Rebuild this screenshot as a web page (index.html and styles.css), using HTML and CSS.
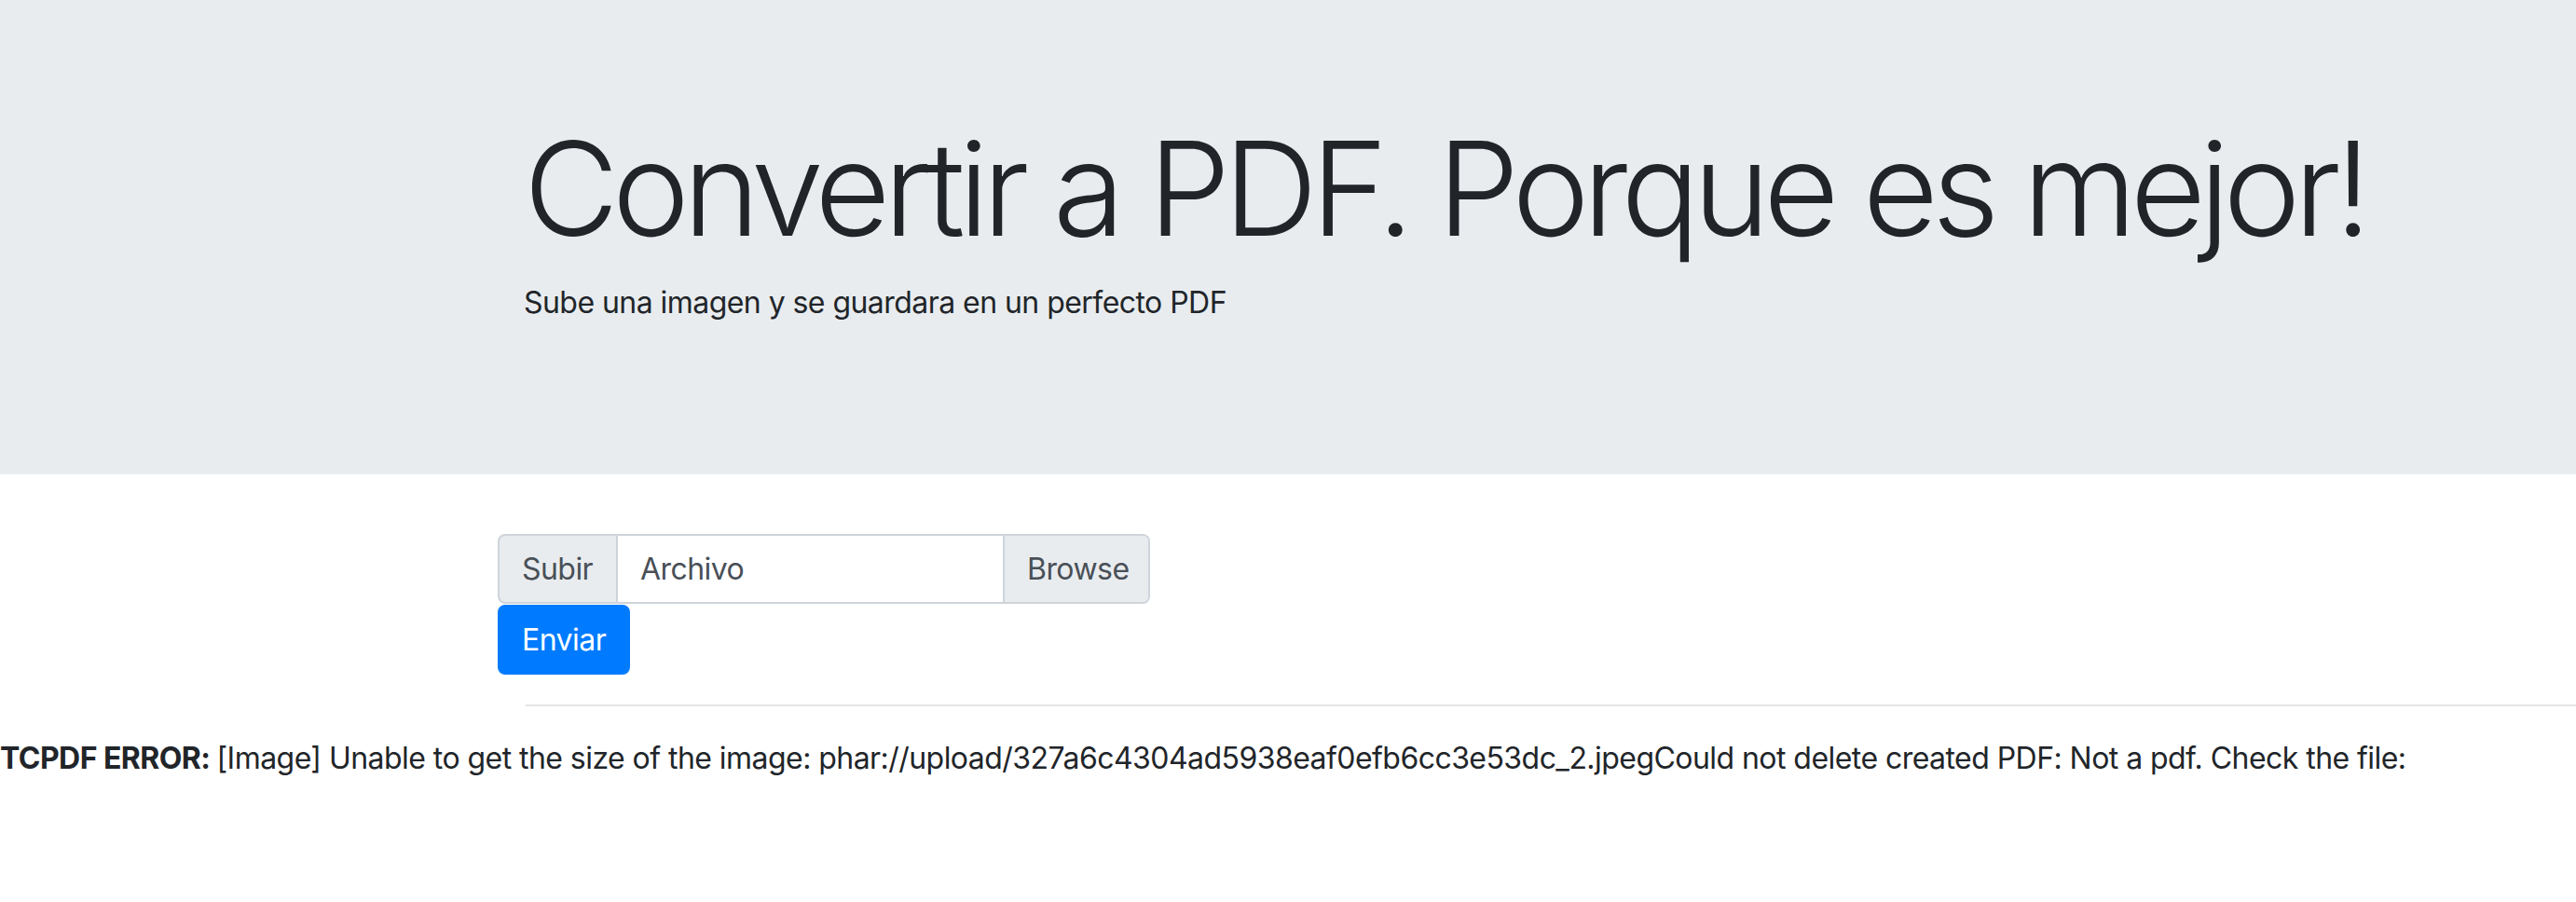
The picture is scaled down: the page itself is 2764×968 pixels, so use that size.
FILE: index.html
```html
<!DOCTYPE html>
<html lang="es">
<head>
<meta charset="utf-8">
<title>Convertir a PDF</title>
<link rel="stylesheet" href="styles.css">
</head>
<body>
<div class="jumbotron">
  <div class="jumbo-inner">
    <h1 class="display">Convertir a PDF. Porque es mejor!</h1>
    <p class="lead">Sube una imagen y se guardara en un perfecto PDF</p>
  </div>
</div>
<div class="main">
  <form class="upload">
    <div class="input-group">
      <span class="addon">Subir</span>
      <div class="file">
        <span class="file-label">Archivo</span>
        <span class="browse">Browse</span>
      </div>
    </div>
    <button class="btn" type="button">Enviar</button>
  </form>
  <hr class="rule">
</div>
<p class="error"><strong>TCPDF ERROR: </strong>[Image] Unable to get the size of the image: phar://upload/327a6c4304ad5938eaf0efb6cc3e53dc_2.jpegCould not delete created PDF: Not a pdf. Check the file:</p>
</body>
</html>
```
FILE: styles.css
```css
* { box-sizing: border-box; }
html, body {
  margin: 0;
  padding: 0;
  background: #fff;
}
body {
  font-family: Inter, "Noto Sans", sans-serif;
  font-size: 32px;
  line-height: 1.5;
  letter-spacing: -0.55px;
  color: #212529;
  overflow: hidden;
}
.jumbotron {
  background: #e9ecef;
  height: 509px;
  padding: 118px 0 0 562px;
  margin-bottom: 64px;
}
.display {
  margin: 0 0 15px 0;
  font-size: 140px;
  font-weight: 300;
  line-height: 1.2;
  letter-spacing: -7px;
  white-space: nowrap;
}
.lead {
  margin: 0;
  font-size: 32px;
  line-height: 1.5;
}
.main {
  display: flex;
  flex-direction: column;
}
.upload {
  margin-left: 534px;
  display: flex;
  flex-direction: column;
  align-items: flex-start;
}
.input-group {
  display: flex;
  width: 700px;
  height: 75px;
  color: #495057;
}
.addon {
  display: flex;
  align-items: center;
  width: 129px;
  padding: 0 24px;
  background: #e9ecef;
  border: 2px solid #ced4da;
  border-radius: 8px 0 0 8px;
}
.file {
  flex: 1;
  display: flex;
  background: #fff;
  border: 2px solid #ced4da;
  border-left: 0;
  border-radius: 0 8px 8px 0;
  overflow: hidden;
}
.file-label {
  flex: 1;
  display: flex;
  align-items: center;
  padding: 0 24px;
}
.browse {
  display: flex;
  align-items: center;
  width: 156px;
  padding: 0 24px;
  background: #e9ecef;
  border-left: 2px solid #ced4da;
}
.btn {
  margin-top: 1px;
  height: 75px;
  padding: 0 24px;
  font-family: inherit;
  font-size: 32px;
  line-height: 1.5;
  letter-spacing: -0.55px;
  color: #fff;
  background: #007bff;
  border: 2px solid #007bff;
  border-radius: 8px;
}
.rule {
  margin: 32px 0 32px 564px;
  border: 0;
  border-top: 2px solid rgba(0, 0, 0, 0.1);
  height: 0;
}
.error {
  margin: 0;
  white-space: nowrap;
}
.error strong {
  font-weight: 700;
}
```
